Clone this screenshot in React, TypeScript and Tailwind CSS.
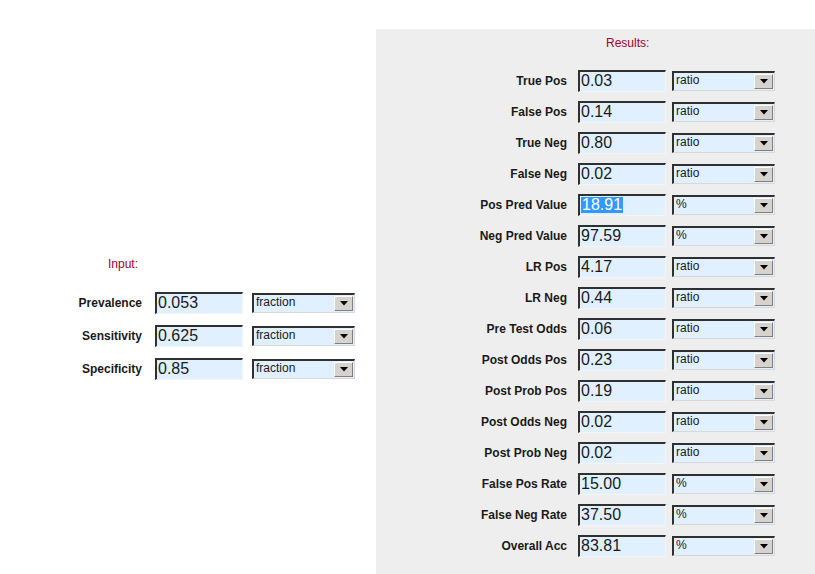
import React from 'react';

type Row = { label: string; value: string; unit: string; selected?: boolean };

const inputs: Row[] = [
  { label: 'Prevalence', value: '0.053', unit: 'fraction' },
  { label: 'Sensitivity', value: '0.625', unit: 'fraction' },
  { label: 'Specificity', value: '0.85', unit: 'fraction' },
];

const results: Row[] = [
  { label: 'True Pos', value: '0.03', unit: 'ratio' },
  { label: 'False Pos', value: '0.14', unit: 'ratio' },
  { label: 'True Neg', value: '0.80', unit: 'ratio' },
  { label: 'False Neg', value: '0.02', unit: 'ratio' },
  { label: 'Pos Pred Value', value: '18.91', unit: '%', selected: true },
  { label: 'Neg Pred Value', value: '97.59', unit: '%' },
  { label: 'LR Pos', value: '4.17', unit: 'ratio' },
  { label: 'LR Neg', value: '0.44', unit: 'ratio' },
  { label: 'Pre Test Odds', value: '0.06', unit: 'ratio' },
  { label: 'Post Odds Pos', value: '0.23', unit: 'ratio' },
  { label: 'Post Prob Pos', value: '0.19', unit: 'ratio' },
  { label: 'Post Odds Neg', value: '0.02', unit: 'ratio' },
  { label: 'Post Prob Neg', value: '0.02', unit: 'ratio' },
  { label: 'False Pos Rate', value: '15.00', unit: '%' },
  { label: 'False Neg Rate', value: '37.50', unit: '%' },
  { label: 'Overall Acc', value: '83.81', unit: '%' },
];

function ValueBox({ value, selected }: { value: string; selected?: boolean }) {
  return (
    <div className="w-[88px] h-[22px] bg-[#e1f0ff] border-t-2 border-l-2 border-[#303030] border-r border-b border-r-[#f4f4f4] border-b-[#f4f4f4] flex items-center pl-[1px] text-[16px] leading-none text-[#1a1a1a]">
      {selected ? <span className="bg-[#3399ff] text-white px-[1px]">{value}</span> : value}
    </div>
  );
}

function UnitSelect({ unit }: { unit: string }) {
  return (
    <div className="w-[103px] h-[20px] bg-[#e1f0ff] border-t-2 border-l-2 border-[#303030] border-r border-b border-r-[#d8d8d8] border-b-[#d8d8d8] flex items-center justify-between text-[12px] leading-none text-[#1a1a1a]">
      <span className="pl-[2px] -mt-[2px]">{unit}</span>
      <span className="w-[19px] h-[15px] mr-[1px] bg-[#d6d3ce] border-t border-l border-white border-r border-b border-r-[#808080] border-b-[#808080] flex items-center justify-center">
        <svg width="8" height="5" viewBox="0 0 8 5">
          <path d="M0 0h8L4 4.5z" fill="#000" />
        </svg>
      </span>
    </div>
  );
}

export default function App() {
  return (
    <div className="w-[815px] h-[574px] bg-white flex overflow-hidden" style={{ fontFamily: '"Liberation Sans", Arial, sans-serif' }}>
      {/* Input column */}
      <div className="w-[376px] shrink-0 pt-[256px]">
        <div className="ml-[108px] text-[12px] leading-[16px] text-[#a0002a]">Input:</div>
        <div className="mt-[14px]">
          {inputs.map((r) => (
            <div key={r.label} className="h-[33px] flex items-center">
              <div className="w-[142px] text-right text-[12px] font-bold text-[#1a1a1a]">{r.label}</div>
              <div className="ml-[13px]">
                <ValueBox value={r.value} />
              </div>
              <div className="ml-[9px]">
                <UnitSelect unit={r.unit} />
              </div>
            </div>
          ))}
        </div>
      </div>

      {/* Results panel */}
      <div className="flex-1 mt-[29px] bg-[#eeeeee] pt-[6px]">
        <div className="ml-[230px] text-[12px] leading-[16px] text-[#a0002a]">Results:</div>
        <div className="mt-[14px]">
          {results.map((r) => (
            <div key={r.label} className="h-[31px] flex items-center">
              <div className="w-[191px] text-right text-[12px] font-bold text-[#1a1a1a]">{r.label}</div>
              <div className="ml-[11px]">
                <ValueBox value={r.value} selected={r.selected} />
              </div>
              <div className="ml-[6px]">
                <UnitSelect unit={r.unit} />
              </div>
            </div>
          ))}
        </div>
      </div>
    </div>
  );
}
